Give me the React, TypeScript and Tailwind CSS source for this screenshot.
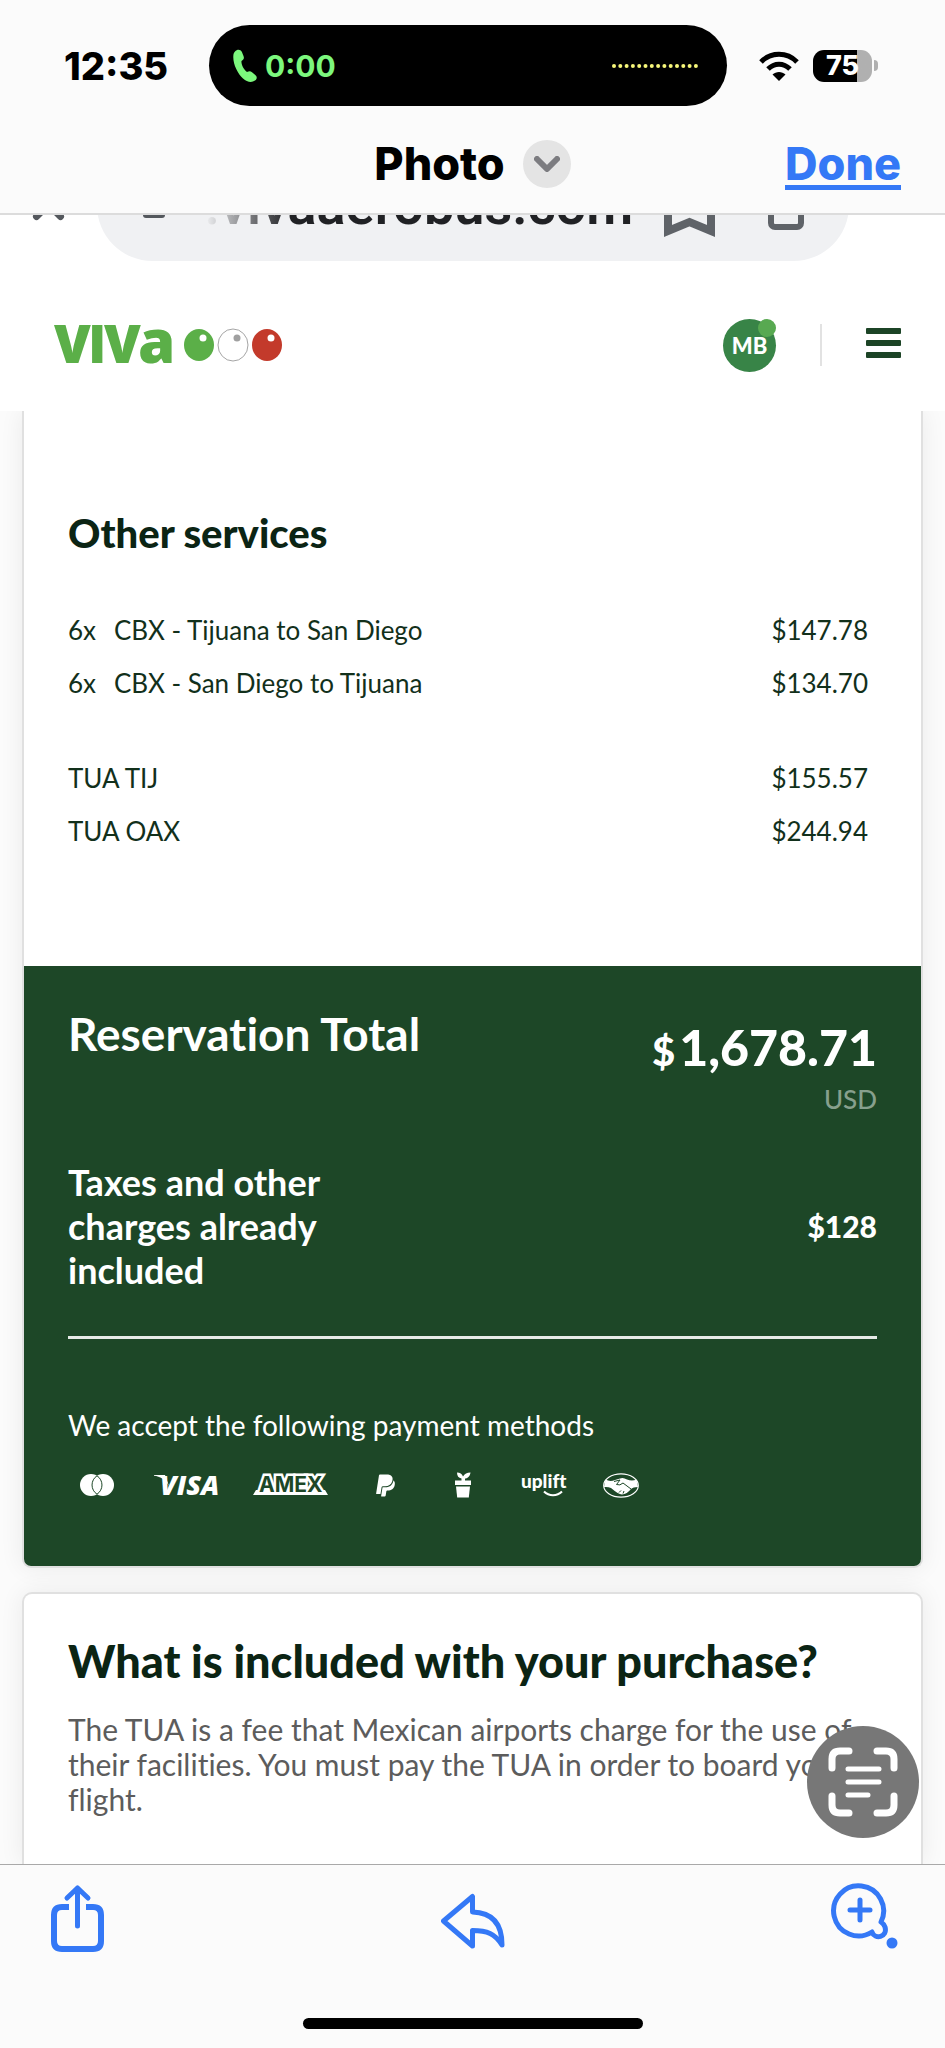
import React from 'react';
import { FaPaypal } from 'react-icons/fa';

interface ServiceRow {
  quantity?: string;
  name: string;
  price: string;
}

const extras: ServiceRow[] = [
  { quantity: '6x', name: 'CBX - Tijuana to San Diego', price: '$147.78' },
  { quantity: '6x', name: 'CBX - San Diego to Tijuana', price: '$134.70' },
];

const airportFees: ServiceRow[] = [
  { name: 'TUA TIJ', price: '$155.57' },
  { name: 'TUA OAX', price: '$244.94' },
];

const StatusBar: React.FC = () => (
  <div className="flex items-center h-[81px] mt-[25px] font-['Inter',sans-serif]">
    <div className="w-[209px] pl-[64px] text-[38px] font-extrabold leading-none">12:35</div>
    <div className="flex-1 h-full rounded-full bg-black flex items-center pl-[24px] pr-[29px]">
      <svg className="w-[24px] h-[33px]" viewBox="0 0 24 33" fill="#7cf77d">
        <path d="M2 2.500C4 0 7.500 0 8.800 2.800L10.500 7C11.500 9.500 10.500 10.500 8.500 12C8 15 10.500 20.500 14 23C16 22.200 17.500 22 19 23.300L22.300 26C24.500 28 24 30 22 31.500C18.500 34 14 33 10 29.500C4.500 24.500 0 15 .3 7.500C.4 5 .8 3.800 2 2.500Z" />
      </svg>
      <span className="ml-[8px] text-[30px] font-bold leading-none text-[#7cf77d]">0:00</span>
      <svg className="ml-auto w-[86px] h-[4px]" viewBox="0 0 86 4" fill="#f7f77a">
        {Array.from({ length: 14 }, (_, i) => (
          <circle key={i} cx={2 + i * 6.3} cy="2" r="2" />
        ))}
      </svg>
    </div>
    <div className="w-[218px] flex items-center pl-[32px]">
      <svg className="w-[40px] h-[30px]" viewBox="0 0 40 30">
        <path d="M2 11C12 .8 28 .8 38 11M9 18C15.500 11.500 24.500 11.500 31 18" fill="none" stroke="#000" strokeWidth="5" />
        <path d="M20 30L13.500 23.500C17 20 23 20 26.500 23.500Z" />
      </svg>
      <div className="ml-[14px] w-[59px] h-[32px] rounded-[11px] bg-gradient-to-r from-black from-75% to-[#b0b0b0] to-75% flex items-center justify-center text-[27px] font-extrabold leading-none text-white">
        75
      </div>
      <div className="ml-[2px] w-[4px] h-[11px] rounded-r-full bg-[#b0b0b0]" />
    </div>
  </div>
);

const PreviewHeader: React.FC = () => (
  <div className="grid grid-cols-[1fr_auto_1fr] items-center h-[109px] pt-[8px] border-b-2 border-[#dcdcdc] font-['Inter',sans-serif] text-[45px] font-extrabold leading-none">
    <h1 className="col-start-2 flex items-center gap-[18px]">
      Photo
      <button type="button" aria-label="More options" className="size-[48px] rounded-full bg-[#e4e4e4] flex items-center justify-center">
        <svg className="w-[26px] h-[16px]" viewBox="0 0 26 16" fill="none" stroke="#7c7c80" strokeWidth="6" strokeLinecap="round" strokeLinejoin="round">
          <path d="M3 3L13 13L23 3" />
        </svg>
      </button>
    </h1>
    <button type="button" className="justify-self-end mr-[44px] pt-[6px] border-b-[5px] border-[#3478f6] leading-[42px] text-[#3478f6]">
      Done
    </button>
  </div>
);

// Only the lower edge of the browser's address bar is visible
const AddressBar: React.FC = () => (
  <div className="h-[46px] overflow-hidden flex items-end bg-white">
    <div className="flex-1 h-[111px] flex items-center">
      <svg className="ml-[32px] w-[33px] h-[30px]" viewBox="0 0 33 30" fill="none" stroke="#54585d" strokeWidth="7" strokeLinecap="round">
        <path d="M4.500 25.500L28.500 1.500M28.500 25.500L4.500 1.500" />
      </svg>
    </div>
    <div className="w-[752px] h-[111px] shrink-0 rounded-full bg-[#f0f1f3] flex items-center pl-[46px] pr-[45px]">
      <svg className="w-[22px] h-[25px]" viewBox="0 0 22 25" fill="#54585d">
        <rect width="22" height="25" rx="3" />
      </svg>
      <span className="ml-[40px] font-['Roboto',sans-serif] text-[54px] font-semibold leading-none bg-gradient-to-r from-[#f0f1f3] to-[#202124] to-20% bg-clip-text text-transparent">
        .vivaaerobus.com
      </span>
      <svg className="ml-auto w-[51px] h-[64px]" viewBox="0 0 51 64" fill="none" stroke="#5f6368" strokeWidth="8">
        <path d="M4 4H47V57L25.500 48L4 57Z" />
      </svg>
      <svg className="ml-[53px] w-[36px] h-[64px]" viewBox="0 0 36 64" fill="none" stroke="#5f6368" strokeWidth="6">
        <rect x="3" y="20" width="30" height="33" rx="4" />
      </svg>
    </div>
    <div className="flex-1" />
  </div>
);

const SiteHeader: React.FC = () => (
  <header className="h-[150px] flex items-center bg-white pl-[54px] pr-[44px] pt-[18px]">
    <a href="#home" aria-label="Viva">
      <svg className="w-[230px] h-[84px]" viewBox="0 -18 230 84" fontFamily="Open Sans, sans-serif" fontWeight="800">
        <g fill="#5baf48">
          <text x="0" y="42" fontSize="53">V</text>
          <text x="34" y="42" fontSize="53">I</text>
          <text x="50" y="42" fontSize="53">V</text>
          <text x="84" y="42" fontSize="60">a</text>
        </g>
        <ellipse cx="145" cy="24" rx="15" ry="16" fill="#5baf48" />
        <circle cx="149" cy="17" r="3.500" fill="#fff" />
        <ellipse cx="179" cy="24" rx="15" ry="16" fill="#fff" stroke="#a5a5a5" />
        <circle cx="183" cy="17" r="3.500" fill="#a0a0a0" />
        <ellipse cx="213" cy="24" rx="15" ry="16" fill="#c33a2b" />
        <circle cx="217" cy="17" r="3.500" fill="#fff" />
      </svg>
    </a>
    <button type="button" className="relative ml-auto size-[53px] rounded-full bg-[#388447] font-['Lato',sans-serif] text-[22px] font-black text-white">
      MB
      <span className="absolute top-0 right-0 size-[18px] rounded-full bg-[#58a951]" />
    </button>
    <div className="ml-[44px] w-[2px] h-[42px] bg-[#e2e2e2]" />
    <button type="button" aria-label="Menu" className="ml-[44px] mb-[4px] w-[35px] flex flex-col gap-[6px]">
      <span className="h-[6px] rounded-[1px] bg-[#1c4426]" />
      <span className="h-[6px] rounded-[1px] bg-[#1c4426]" />
      <span className="h-[6px] rounded-[1px] bg-[#1c4426]" />
    </button>
  </header>
);

const ServiceTable: React.FC<{ rows: ServiceRow[]; className?: string }> = ({ rows, className = '' }) => (
  <table className={`w-full text-[26px] leading-[53px] text-[#12301b] ${className}`}>
    <tbody>
      {rows.map((row) => (
        <tr key={row.name}>
          {row.quantity && <td className="w-[46px]">{row.quantity}</td>}
          <td>{row.name}</td>
          <td className="text-right pr-[9px]">{row.price}</td>
        </tr>
      ))}
    </tbody>
  </table>
);

const PaymentMethods: React.FC = () => (
  <div className="mt-[28px] h-[28px] flex items-center pl-[12px] text-white">
    <svg className="w-[34px] h-[22px]" viewBox="0 0 34 22" role="img" aria-label="Mastercard">
      <circle cx="23" cy="11" r="11" fill="#fff" />
      <circle cx="11" cy="11" r="11" fill="#fff" />
      <path d="M17 1.800A11 11 0 0 1 17 20.200A11 11 0 0 1 17 1.800Z" fill="#fff" stroke="#1d4727" />
    </svg>
    <svg className="ml-[40px] w-[66px] h-[24px] overflow-visible" viewBox="0 0 66 24" fill="#fff">
      <path d="M0 2H11L15 13C11 6 6 3.500 0 2.800Z" />
      <text x="6" y="22" fontFamily="Open Sans, sans-serif" fontSize="27" fontWeight="800" fontStyle="italic">VISA</text>
    </svg>
    <svg className="ml-[33px] w-[76px] h-[24px] overflow-visible" viewBox="0 0 76 24">
      <path d="M3 17H72L75 22H0Z" fill="#fff" />
      <text x="6" y="19" fontFamily="Inter, sans-serif" fontSize="21" fontWeight="700" fill="#1d4727" stroke="#fff" strokeWidth="5" paintOrder="stroke">AMEX</text>
    </svg>
    <FaPaypal className="ml-[46px] w-[21px] h-[25px]" />
    <svg className="ml-[59px] w-[16px] h-[26px]" viewBox="0 0 16 26" fill="#fff">
      <path d="M2 0.500C5 .5 7 2 8 4.500C9.500 2 12 .5 15.500 .5C15 4 13 6.500 10 6.500V8.500H16V13H0V8.500H6.500V6.500C3.500 6 2 4 2 .5Z" />
      <path d="M1 14.500H15L13.800 25.500H2.200Z" />
    </svg>
    <svg className="ml-[50px] w-[46px] h-[26px] overflow-visible" viewBox="0 0 46 26" fill="#fff">
      <text x="0" y="16" fontFamily="Lato, sans-serif" fontSize="19" fontWeight="900">uplift</text>
      <path d="M23 19.500C28 24.500 36 24.500 41 19.500" fill="none" stroke="#fff" strokeWidth="2" />
    </svg>
    <svg className="ml-[36px] w-[36px] h-[25px]" viewBox="0 0 36 25" fill="none" role="img" aria-label="Mercado Pago">
      <ellipse cx="18" cy="12.500" rx="17.300" ry="11.700" stroke="#fff" strokeWidth="1.200" />
      <path d="M2.500 6.500Q7 9 12 7L17 5.500Q20 4 24 6.500Q29 8.500 33.500 6.500L35 14Q30 14 28 16Q24 21 19 21.500Q15 21 8 15Q5 13.500 1 14Z" fill="#fff" />
      <path d="M11 8.500L17 7L13.500 11.500Q17 13 20 10L28 16M16 19.500L18 17.500M20 20.500L21 18" stroke="#1d4727" />
    </svg>
  </div>
);

const ReservationTotal: React.FC = () => (
  <div className="bg-[#1d4727] text-white pt-[44px] pb-[67px] px-[44px] rounded-b-[7px]">
    <div className="flex justify-between">
      <h2 className="text-[46px] font-bold leading-[48px]">Reservation Total</h2>
      <div className="pt-[7px] text-right">
        <p className="text-[50px] font-black leading-[60px]">
          <span className="mr-[4px] text-[40px]">$</span>1,678.71
        </p>
        <p className="text-[26px] font-medium leading-[36px] text-[#87a08d]">USD</p>
      </div>
    </div>
    <div className="mt-[43px] flex items-center justify-between font-bold leading-[44px]">
      <p className="w-[290px] text-[36px]">Taxes and other charges already included</p>
      <p className="text-[30px] font-black">$128</p>
    </div>
    <hr className="mt-[44px] border-t-[3px] border-[#e6ebe7]" />
    <p className="mt-[68px] text-[28px] leading-[36px]">We accept the following payment methods</p>
    <PaymentMethods />
  </div>
);

const LiveTextButton: React.FC = () => (
  <button type="button" aria-label="Live Text" className="absolute right-[26px] bottom-[26px] size-[112px] rounded-full bg-[#777] flex items-center justify-center">
    <svg className="size-[70px]" viewBox="0 0 70 70" fill="none" stroke="#fff" strokeLinecap="round">
      <path strokeWidth="7" d="M4 21V12Q4 4 12 4H21M49 4H58Q66 4 66 12V21M66 49V58Q66 66 58 66H49M21 66H12Q4 66 4 58V49" />
      <path strokeWidth="5" d="M20 22H51M20 35H51M20 48H40" />
    </svg>
  </button>
);

const BottomToolbar: React.FC = () => (
  <footer className="border-t border-[#a9a9a9]">
    <div className="h-[153px] grid grid-cols-3 items-start pl-[50px] pr-[47px] pt-[16px]">
      <button type="button" aria-label="Share" className="justify-self-start">
        <svg className="w-[55px] h-[72px]" viewBox="0 0 55 72" fill="none" stroke="#3478f6">
          <path strokeWidth="6" d="M19 26H12Q4 26 4 34V60Q4 68 12 68H43Q51 68 51 60V34Q51 26 43 26H36" />
          <path strokeWidth="5" strokeLinecap="round" strokeLinejoin="round" d="M27.500 45V7M17 17L27.500 7L38 17" />
        </svg>
      </button>
      <button type="button" aria-label="Reply" className="justify-self-center">
        <svg className="w-[66px] h-[72px]" viewBox="0 0 66 72" fill="none" stroke="#3478f6" strokeWidth="5" strokeLinejoin="round">
          <path d="M2.500 40L31.500 15.500V31C50 31.500 61 41 61 64C54 52.500 46 49.500 31.500 49.500V65Z" />
        </svg>
      </button>
      <button type="button" aria-label="Zoom" className="justify-self-end">
        <svg className="w-[67px] h-[72px]" viewBox="0 0 67 72" fill="none" stroke="#3478f6" strokeWidth="5" strokeLinecap="round" strokeLinejoin="round">
          <path d="M50 41A25 25 0 1 0 41 51C43.500 59 57 56.500 54 46Q53 43 50 41Z" />
          <path d="M19 29H39M29 19V39" />
          <circle cx="61" cy="62" r="5.500" fill="#3478f6" stroke="none" />
        </svg>
      </button>
    </div>
    <div className="mx-auto mb-[17px] w-[340px] h-[11px] rounded-full bg-black" />
  </footer>
);

const App: React.FC = () => (
  <div className="min-h-screen flex flex-col bg-[#fbfbfb] text-black overflow-hidden">
    <StatusBar />
    <PreviewHeader />
    <AddressBar />
    <SiteHeader />
    <main className="relative overflow-hidden px-[22px] font-['Lato',sans-serif] [font-variant-ligatures:none]">
      <section className="bg-white border-2 border-t-0 border-[#e0e0e0] rounded-b-[9px] shadow-[0_0_24px_rgba(0,0,0,0.07)]">
        <div className="pt-[100px] pb-[108px] px-[44px]">
          <h2 className="text-[40px] font-black leading-[44px] text-[#0b2414]">Other services</h2>
          <ServiceTable rows={extras} className="mt-[49px]" />
          <ServiceTable rows={airportFees} className="mt-[42px]" />
        </div>
        <ReservationTotal />
      </section>
      <section className="mt-[24px] bg-white border-2 border-b-0 border-[#e0e0e0] rounded-t-[10px] shadow-[0_0_24px_rgba(0,0,0,0.07)] px-[44px] pt-[41px] pb-[47px]">
        <h2 className="text-[45px] font-black leading-[52px] text-[#0b2414]">What is included with your purchase?</h2>
        <p className="mt-[25px] text-[30px] leading-[35px] text-[#5c5c5c]">
          The TUA is a fee that Mexican airports charge for the use of their facilities. You must pay the TUA in order to board your flight.
        </p>
      </section>
      <LiveTextButton />
    </main>
    <BottomToolbar />
  </div>
);

export default App;
